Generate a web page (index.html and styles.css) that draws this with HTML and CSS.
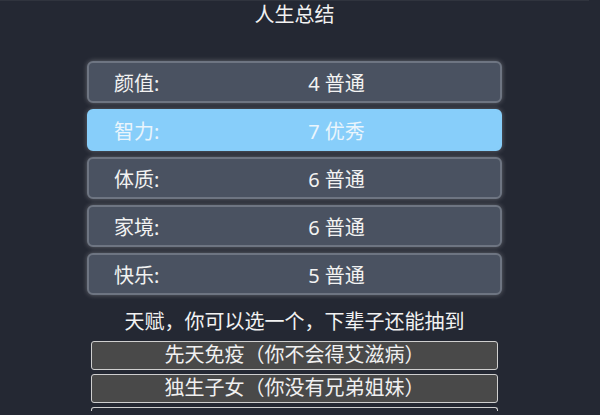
FILE: index.html
```html
<!DOCTYPE html>
<html lang="zh">
<head>
<meta charset="utf-8">
<title>人生总结</title>
<link rel="stylesheet" href="styles.css">
</head>
<body>
<div class="page">
  <div class="title">人生总结</div>
  <div class="stats">
    <div class="stat"><span class="label">颜值:</span><span class="value">4 普通</span></div>
    <div class="stat stat-hi"><span class="label">智力:</span><span class="value">7 优秀</span></div>
    <div class="stat"><span class="label">体质:</span><span class="value">6 普通</span></div>
    <div class="stat"><span class="label">家境:</span><span class="value">6 普通</span></div>
    <div class="stat"><span class="label">快乐:</span><span class="value">5 普通</span></div>
  </div>
  <div class="hint">天赋，你可以选一个，下辈子还能抽到</div>
  <div class="talents">
    <div class="talent">先天免疫（你不会得艾滋病）</div>
    <div class="talent">独生子女（你没有兄弟姐妹）</div>
    <div class="talent talent-cut"></div>
  </div>
</div>
</body>
</html>
```
FILE: styles.css
```css
html, body {
  margin: 0;
  padding: 0;
  background: #242833;
  height: 100%;
  overflow: hidden;
}
body {
  font-family: "Noto Sans", "Noto Sans CJK SC", sans-serif;
  color: #f2f2f2;
}
.page {
  width: 589px;
  display: flex;
  flex-direction: column;
  align-items: center;
  border-top: 1px solid #30343e;
}
.title {
  font-size: 20px;
  line-height: 27px;
  height: 27px;
}
.stats {
  margin-top: 33px;
  width: 415px;
  display: flex;
  flex-direction: column;
  gap: 6px;
}
.stat {
  box-sizing: border-box;
  height: 42px;
  display: flex;
  align-items: center;
  padding: 0 25px;
  background: #4a5261;
  border: 2px solid #6e7582;
  border-radius: 6px;
  box-shadow: 0 0 5px rgba(255, 255, 255, 0.3);
  font-size: 20px;
}
.stat-hi {
  background: #87cefa;
  border-color: #87cefa;
  color: #eaf5fc;
}
.label {
  width: 84px;
}
.value {
  flex: 1;
  text-align: center;
}
.hint {
  margin-top: 13px;
  font-size: 20px;
  line-height: 28px;
}
.talents {
  margin-top: 5px;
  width: 407px;
  display: flex;
  flex-direction: column;
  gap: 4px;
}
.talent {
  box-sizing: border-box;
  height: 29px;
  background: #494949;
  border: 1px solid #cfcfcf;
  border-radius: 3px;
  text-align: center;
  font-size: 20px;
  line-height: 26px;
  color: #f0f0f0;
}
.talent-cut {
  height: 4px;
  background: #242833;
  border-bottom: none;
  border-radius: 3px 3px 0 0;
}
```
